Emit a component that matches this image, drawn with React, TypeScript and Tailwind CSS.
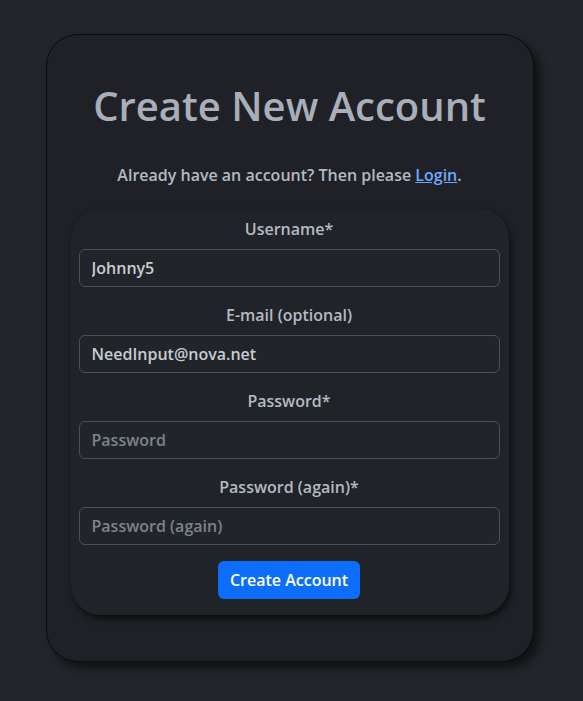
import React from "react";

const font = { fontFamily: '"Open Sans", "Noto Sans", sans-serif' };

function Field({ label, value, placeholder, type = "text" }: { label: string; value?: string; placeholder?: string; type?: string }) {
  return (
    <div className="mb-4 flex flex-col">
      <label className="mb-2 h-6 text-center text-[16px] leading-6 font-semibold text-[#b4bac2]">{label}</label>
      <input
        type={type}
        defaultValue={value}
        placeholder={placeholder}
        className="h-[38px] w-full rounded-md border border-[#495057] bg-[#212529] px-3 text-[16px] font-semibold text-[#c8ccd1] placeholder:text-[#7c838b] outline-none"
      />
    </div>
  );
}

export default function App() {
  return (
    <div className="min-h-[701px] w-full bg-[#222529] pt-[34px]" style={font}>
      <div className="mx-auto w-[488px] -translate-x-[2px] rounded-[32px] border border-[#0b0c0e] bg-[#1f2126] px-6 pb-[46px] pt-[47px] shadow-[6px_6px_8px_rgba(0,0,0,0.55)]">
        <h1 className="text-center text-[40px] leading-[48px] font-semibold text-[#a8afba]">Create New Account</h1>
        <p className="mt-[33px] text-center text-[16px] leading-6 font-semibold text-[#b4bac2]">
          Already have an account? Then please{" "}
          <a href="#" className="text-[#6ea8fe] underline">Login</a>.
        </p>
        <div className="mt-[22px] rounded-[30px] bg-[#202328] p-2 pr-[9px] shadow-[2px_4px_6px_rgba(0,0,0,0.6)]">
          <Field label="Username*" value="Johnny5" />
          <Field label="E-mail (optional)" value="NeedInput@nova.net" />
          <Field label="Password*" placeholder="Password" type="password" />
          <Field label="Password (again)*" placeholder="Password (again)" type="password" />
          <div className="mb-2 flex justify-center">
            <button className="h-[38px] rounded-md bg-[#0d6efd] px-3 text-[16px] font-semibold text-white">Create Account</button>
          </div>
        </div>
      </div>
    </div>
  );
}
